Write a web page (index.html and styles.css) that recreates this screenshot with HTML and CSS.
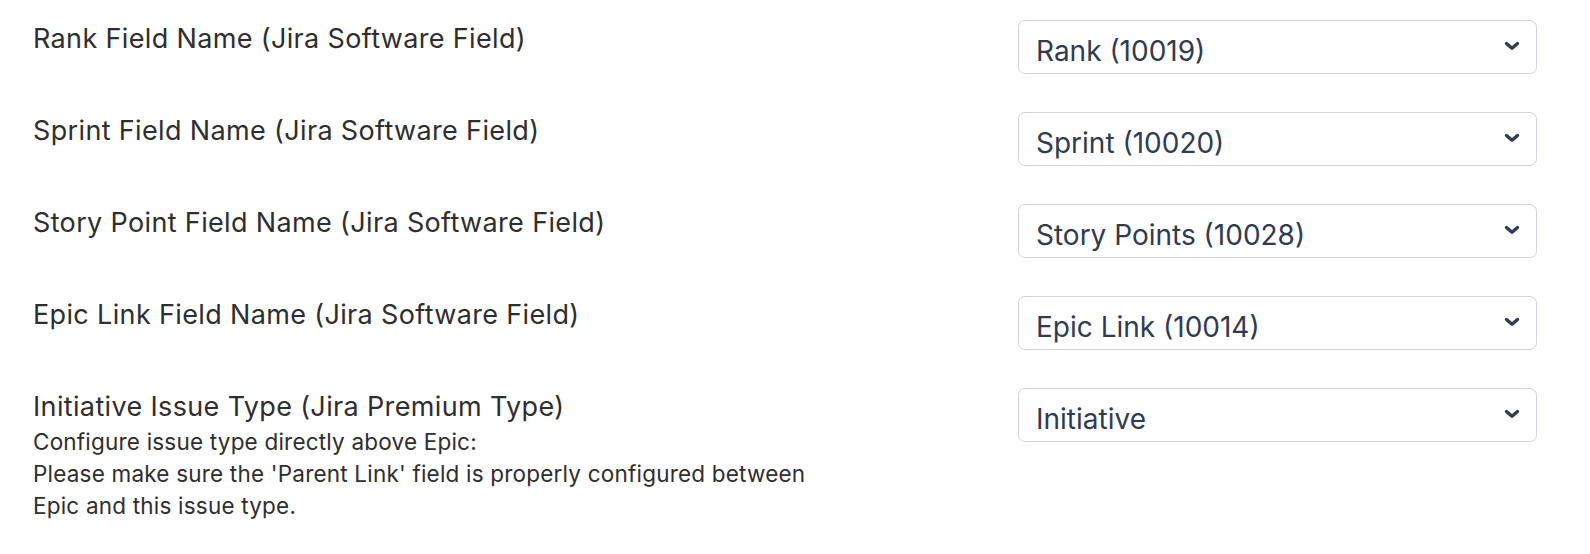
FILE: index.html
```html
<!DOCTYPE html>
<html lang="en">
<head>
<meta charset="utf-8">
<title>Jira Field Settings</title>
<link rel="stylesheet" href="styles.css">
</head>
<body>
<div class="form">
  <div class="row">
    <div class="label-col"><div class="label">Rank Field Name (Jira Software Field)</div></div>
    <div class="select"><span class="value">Rank (10019)</span><svg class="chev" viewBox="0 0 16 10" width="16" height="10"><path d="M2.5 2.5 L8 7.2 L13.5 2.5" fill="none" stroke="#2f3b52" stroke-width="3.4" stroke-linecap="round" stroke-linejoin="round"/></svg></div>
  </div>
  <div class="row">
    <div class="label-col"><div class="label">Sprint Field Name (Jira Software Field)</div></div>
    <div class="select"><span class="value">Sprint (10020)</span><svg class="chev" viewBox="0 0 16 10" width="16" height="10"><path d="M2.5 2.5 L8 7.2 L13.5 2.5" fill="none" stroke="#2f3b52" stroke-width="3.4" stroke-linecap="round" stroke-linejoin="round"/></svg></div>
  </div>
  <div class="row">
    <div class="label-col"><div class="label">Story Point Field Name (Jira Software Field)</div></div>
    <div class="select"><span class="value">Story Points (10028)</span><svg class="chev" viewBox="0 0 16 10" width="16" height="10"><path d="M2.5 2.5 L8 7.2 L13.5 2.5" fill="none" stroke="#2f3b52" stroke-width="3.4" stroke-linecap="round" stroke-linejoin="round"/></svg></div>
  </div>
  <div class="row">
    <div class="label-col"><div class="label">Epic Link Field Name (Jira Software Field)</div></div>
    <div class="select"><span class="value">Epic Link (10014)</span><svg class="chev" viewBox="0 0 16 10" width="16" height="10"><path d="M2.5 2.5 L8 7.2 L13.5 2.5" fill="none" stroke="#2f3b52" stroke-width="3.4" stroke-linecap="round" stroke-linejoin="round"/></svg></div>
  </div>
  <div class="row">
    <div class="label-col">
      <div class="label">Initiative Issue Type (Jira Premium Type)</div>
      <div class="help">Configure issue type directly above Epic:<br>Please make sure the 'Parent Link' field is properly configured between<br>Epic and this issue type.</div>
    </div>
    <div class="select"><span class="value">Initiative</span><svg class="chev" viewBox="0 0 16 10" width="16" height="10"><path d="M2.5 2.5 L8 7.2 L13.5 2.5" fill="none" stroke="#2f3b52" stroke-width="3.4" stroke-linecap="round" stroke-linejoin="round"/></svg></div>
  </div>
</div>
</body>
</html>
```

FILE: styles.css
```css
html, body {
  margin: 0;
  padding: 0;
  background: #ffffff;
}
body {
  font-family: Inter, "Noto Sans", "Liberation Sans", sans-serif;
  color: #2e2e2e;
}
.form {
  display: flex;
  flex-direction: column;
  gap: 38px;
  padding: 20px 53px 0 33px;
}
.row {
  display: grid;
  grid-template-columns: 1fr 519px;
  column-gap: 32px;
  align-items: start;
}
.label {
  font-size: 27px;
  line-height: 38px;
  letter-spacing: 0.35px;
  color: #2e2e2e;
}
.help {
  margin-top: 0;
  font-size: 22.5px;
  line-height: 32px;
  letter-spacing: 0.2px;
  color: #2e2e2e;
}
.select {
  box-sizing: border-box;
  height: 54px;
  border: 1.5px solid #cfd4dc;
  border-radius: 7px;
  display: flex;
  align-items: center;
  justify-content: space-between;
  padding: 0 16px 0 17px;
  color: #2f3b52;
  font-size: 28px;
}
.value {
  padding-top: 7px;
}
.chev {
  display: block;
  margin-top: -3px;
}
```
